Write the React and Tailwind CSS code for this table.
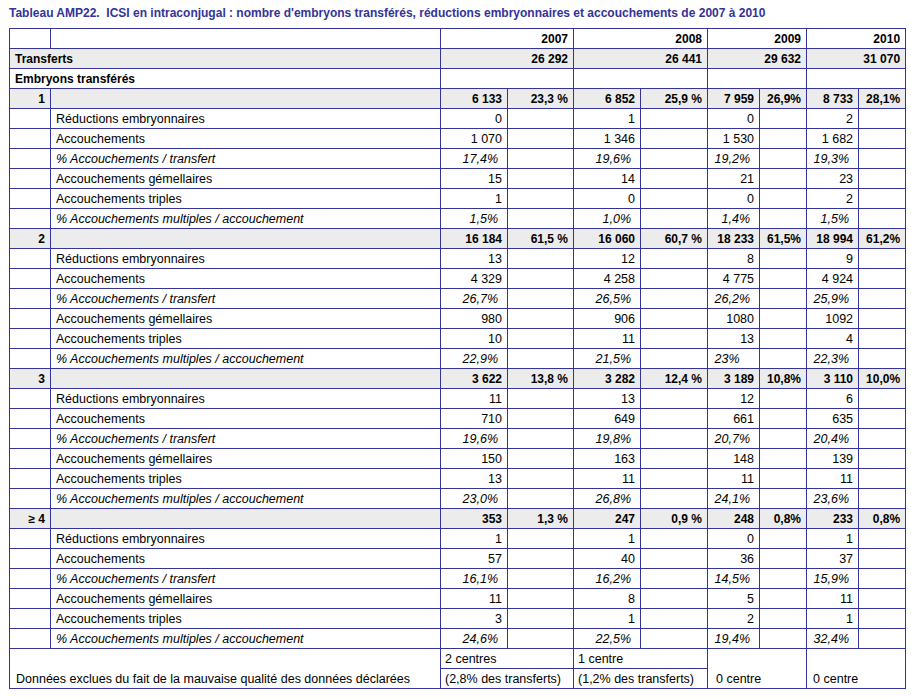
import React from "react";

const years = ["2007", "2008", "2009", "2010"];
const transferts = ["26 292", "26 441", "29 632", "31 070"];

const groups = [
  {
    label: "1",
    head: [["6 133", "23,3 %"], ["6 852", "25,9 %"], ["7 959", "26,9%"], ["8 733", "28,1%"]],
    red: ["0", "1", "0", "2"],
    acc: ["1 070", "1 346", "1 530", "1 682"],
    pacc: ["17,4%", "19,6%", "19,2%", "19,3%"],
    gem: ["15", "14", "21", "23"],
    tri: ["1", "0", "0", "2"],
    pmul: ["1,5%", "1,0%", "1,4%", "1,5%"],
  },
  {
    label: "2",
    head: [["16 184", "61,5 %"], ["16 060", "60,7 %"], ["18 233", "61,5%"], ["18 994", "61,2%"]],
    red: ["13", "12", "8", "9"],
    acc: ["4 329", "4 258", "4 775", "4 924"],
    pacc: ["26,7%", "26,5%", "26,2%", "25,9%"],
    gem: ["980", "906", "1080", "1092"],
    tri: ["10", "11", "13", "4"],
    pmul: ["22,9%", "21,5%", "23%\u00a0\u00a0\u00a0", "22,3%"],
  },
  {
    label: "3",
    head: [["3 622", "13,8 %"], ["3 282", "12,4 %"], ["3 189", "10,8%"], ["3 110", "10,0%"]],
    red: ["11", "13", "12", "6"],
    acc: ["710", "649", "661", "635"],
    pacc: ["19,6%", "19,8%", "20,7%", "20,4%"],
    gem: ["150", "163", "148", "139"],
    tri: ["13", "11", "11", "11"],
    pmul: ["23,0%", "26,8%", "24,1%", "23,6%"],
  },
  {
    label: "≥ 4",
    head: [["353", "1,3 %"], ["247", "0,9 %"], ["248", "0,8%"], ["233", "0,8%"]],
    red: ["1", "1", "0", "1"],
    acc: ["57", "40", "36", "37"],
    pacc: ["16,1%", "16,2%", "14,5%", "15,9%"],
    gem: ["11", "8", "5", "11"],
    tri: ["3", "1", "2", "1"],
    pmul: ["24,6%", "22,5%", "19,4%", "32,4%"],
  },
];

// regular text is drawn a touch wider in the screenshot, bold is not
const td = "border border-[#333399] h-[20px] py-0 px-[5px] leading-[18px] whitespace-nowrap text-[12.5px]";
const bold = "font-bold text-[12px]";
const gray = "bg-[#ececec]";

function DetailRow({ label, values, italic }) {
  return (
    <tr>
      <td className={td}></td>
      <td className={`${td} ${italic ? "italic" : ""}`}>{label}</td>
      {values.map((v, i) => (
        <React.Fragment key={i}>
          <td className={`${td} text-right ${italic ? "italic pr-[9px]" : ""}`}>{v}</td>
          <td className={td}></td>
        </React.Fragment>
      ))}
    </tr>
  );
}

export default function App() {
  return (
    <div className="w-[911px] h-[697px] bg-white text-black text-[12px] px-[9px]" style={{ fontFamily: '"Liberation Sans", Arial, sans-serif' }}>
      <div className="h-[28px] pt-[6px] leading-[14px] font-bold text-[#333399]">
        Tableau AMP22.&nbsp; ICSI en intraconjugal : nombre d'embryons transférés, réductions embryonnaires et accouchements de 2007 à 2010
      </div>
      <table className="border-collapse table-fixed w-[896px]">
        <colgroup>
          <col className="w-[41px]" />
          <col className="w-[390px]" />
          <col className="w-[67px]" />
          <col className="w-[66px]" />
          <col className="w-[67px]" />
          <col className="w-[67px]" />
          <col className="w-[52px]" />
          <col className="w-[47px]" />
          <col className="w-[52px]" />
          <col className="w-[47px]" />
        </colgroup>
        <tbody>
          <tr>
            <td className={td}></td>
            <td className={td}></td>
            {years.map((y) => (
              <td key={y} colSpan={2} className={`${td} text-right ${bold}`}>{y}</td>
            ))}
          </tr>
          <tr className={gray}>
            <td colSpan={2} className={`${td} ${bold}`}>Transferts</td>
            {transferts.map((t) => (
              <td key={t} colSpan={2} className={`${td} text-right ${bold}`}>{t}</td>
            ))}
          </tr>
          <tr>
            <td colSpan={2} className={`${td} ${bold}`}>Embryons transférés</td>
            {years.map((y) => (
              <td key={y} colSpan={2} className={td}></td>
            ))}
          </tr>
          {groups.map((g) => (
            <React.Fragment key={g.label}>
              <tr className={gray}>
                <td className={`${td} text-right ${bold}`}>{g.label}</td>
                <td className={td}></td>
                {g.head.map(([n, p], i) => (
                  <React.Fragment key={i}>
                    <td className={`${td} text-right ${bold}`}>{n}</td>
                    <td className={`${td} text-right ${bold}`}>{p}</td>
                  </React.Fragment>
                ))}
              </tr>
              <DetailRow label="Réductions embryonnaires" values={g.red} />
              <DetailRow label="Accouchements" values={g.acc} />
              <DetailRow label="% Accouchements / transfert" values={g.pacc} italic />
              <DetailRow label="Accouchements gémellaires" values={g.gem} />
              <DetailRow label="Accouchements triples" values={g.tri} />
              <DetailRow label="% Accouchements multiples / accouchement" values={g.pmul} italic />
            </React.Fragment>
          ))}
          <tr>
            <td colSpan={2} rowSpan={2} className={`${td} align-bottom pl-[6px]`}>
              Données exclues du fait de la mauvaise qualité des données déclarées
            </td>
            <td colSpan={2} className={`${td} pl-[4px]`}>2 centres</td>
            <td colSpan={2} className={`${td} pl-[4px]`}>1 centre</td>
            <td colSpan={2} rowSpan={2} className={`${td} align-bottom pl-[8px]`}>0 centre</td>
            <td colSpan={2} rowSpan={2} className={`${td} align-bottom pl-[6px]`}>0 centre</td>
          </tr>
          <tr>
            <td colSpan={2} className={`${td} pl-[4px]`}>(2,8% des transferts)</td>
            <td colSpan={2} className={`${td} pl-[4px]`}>(1,2% des transferts)</td>
          </tr>
        </tbody>
      </table>
    </div>
  );
}
